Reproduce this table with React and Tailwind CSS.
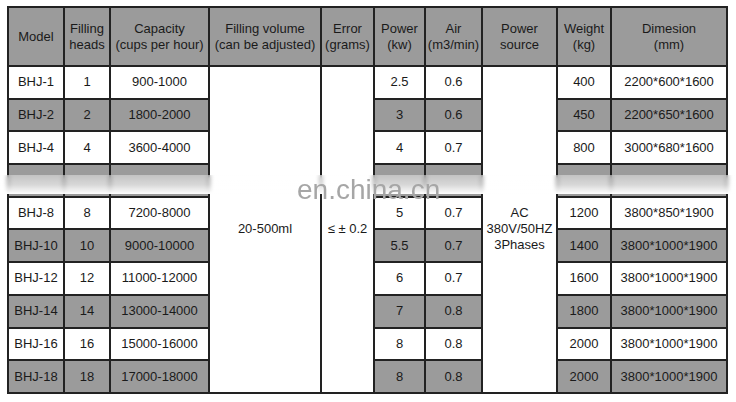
const rows = [
  ["BHJ-1", "1", "900-1000", "2.5", "0.6", "400", "2200*600*1600"],
  ["BHJ-2", "2", "1800-2000", "3", "0.6", "450", "2200*650*1600"],
  ["BHJ-4", "4", "3600-4000", "4", "0.7", "800", "3000*680*1600"],
  ["", "", "", "", "", "", ""],
  ["BHJ-8", "8", "7200-8000", "5", "0.7", "1200", "3800*850*1900"],
  ["BHJ-10", "10", "9000-10000", "5.5", "0.7", "1400", "3800*1000*1900"],
  ["BHJ-12", "12", "11000-12000", "6", "0.7", "1600", "3800*1000*1900"],
  ["BHJ-14", "14", "13000-14000", "7", "0.8", "1800", "3800*1000*1900"],
  ["BHJ-16", "16", "15000-16000", "8", "0.8", "2000", "3800*1000*1900"],
  ["BHJ-18", "18", "17000-18000", "8", "0.8", "2000", "3800*1000*1900"],
];

const widths = [56, 46, 99, 112, 53, 51, 57, 75, 54, 116];

const cell = "border-2 border-[#222] text-center align-middle px-0";

export default function App() {
  return (
    <div
      className="relative w-[736px] h-[402px] bg-white text-[13px] leading-[16px] text-[#1a1a1a]"
      style={{ fontFamily: '"Liberation Sans", Arial, sans-serif' }}
    >
      <div className="pt-[6px] pl-[7px]">
        <table className="table-fixed border-collapse w-[721px]">
          <colgroup>
            {widths.map((w, i) => (
              <col key={i} style={{ width: w }} />
            ))}
          </colgroup>
          <thead>
            <tr className="h-[59px] bg-[#9b9b9b]">
              <th className={`${cell} font-normal`}>Model</th>
              <th className={`${cell} font-normal`}>Filling<br />heads</th>
              <th className={`${cell} font-normal whitespace-nowrap`}>Capacity<br />(cups per hour)</th>
              <th className={`${cell} font-normal whitespace-nowrap`}>Filling volume<br />(can be adjusted)</th>
              <th className={`${cell} font-normal whitespace-nowrap`}>Error<br />(grams)</th>
              <th className={`${cell} font-normal`}>Power<br />(kw)</th>
              <th className={`${cell} font-normal whitespace-nowrap`}>Air<br />(m3/min)</th>
              <th className={`${cell} font-normal`}>Power<br />source</th>
              <th className={`${cell} font-normal`}>Weight<br />(kg)</th>
              <th className={`${cell} font-normal`}>Dimesion<br />(mm)</th>
            </tr>
          </thead>
          <tbody>
            {rows.map((r, i) => {
              const bg = i % 2 === 1 ? "bg-[#9b9b9b]" : "bg-white";
              return (
                <tr key={i} className="h-[32.7px]">
                  <td className={`${cell} ${bg}`}>{r[0]}</td>
                  <td className={`${cell} ${bg}`}>{r[1]}</td>
                  <td className={`${cell} ${bg}`}>{r[2]}</td>
                  {i === 0 && (
                    <>
                      <td rowSpan={10} className={`${cell} bg-white`}>20-500ml</td>
                      <td rowSpan={10} className={`${cell} bg-white whitespace-nowrap`}>≤ ± 0.2</td>
                    </>
                  )}
                  <td className={`${cell} ${bg}`}>{r[3]}</td>
                  <td className={`${cell} ${bg}`}>{r[4]}</td>
                  {i === 0 && (
                    <td rowSpan={10} className={`${cell} bg-white`}>
                      AC<br />380V/50HZ<br />3Phases
                    </td>
                  )}
                  <td className={`${cell} ${bg}`}>{r[5]}</td>
                  <td className={`${cell} ${bg}`}>{r[6]}</td>
                </tr>
              );
            })}
          </tbody>
        </table>
      </div>

      {/* blurred watermark strip */}
      <div className="absolute left-0 top-[175px] w-[736px] h-[19px] backdrop-blur-[2px] bg-gradient-to-b from-white/40 via-white/60 to-white" />
      <div
        className="absolute left-[297px] top-[176px] text-[28px] leading-[28px] text-[#a6a6a6] whitespace-nowrap"
        style={{ fontFamily: '"Liberation Sans", Arial, sans-serif' }}
      >
        en.china.cn
      </div>
    </div>
  );
}
